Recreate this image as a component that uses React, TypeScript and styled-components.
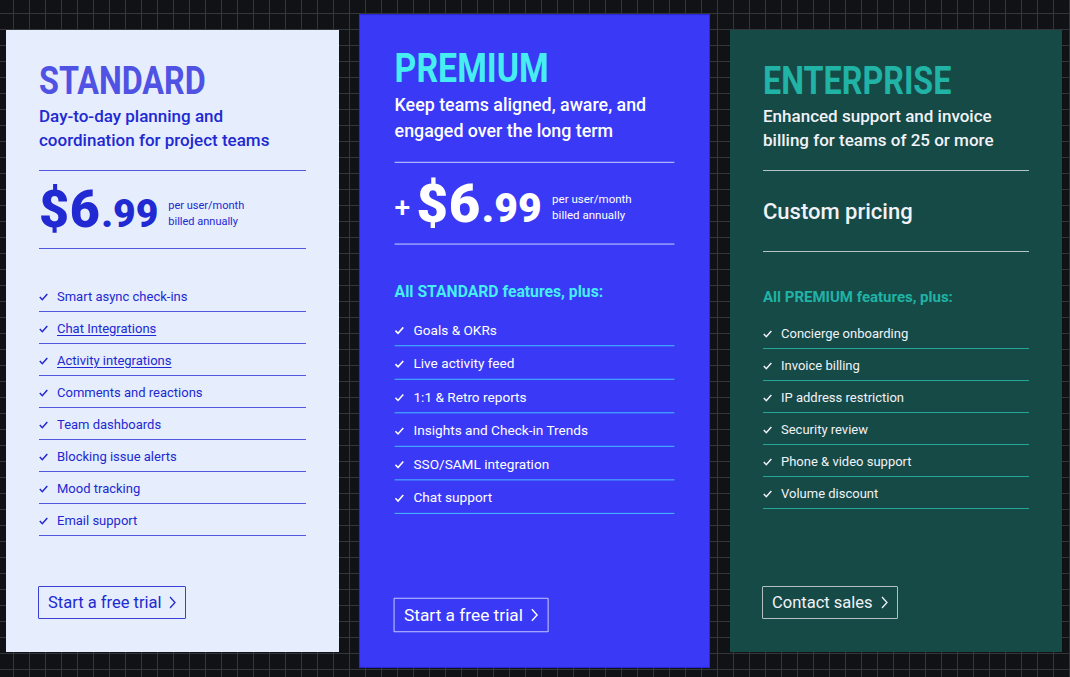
import React from 'react';
import styled, { createGlobalStyle, css } from 'styled-components';

type Tone = 'standard' | 'premium' | 'enterprise';

const palette: Record<
  Tone,
  { bg: string; title: string; text: string; rule: string; itemRule: string; accent: string; button: string }
> = {
  standard: {
    bg: '#e6edfd',
    title: '#4f52e3',
    text: '#2129d2',
    rule: '#5457df',
    itemRule: '#5457df',
    accent: '#2129d2',
    button: '#3a3fd8',
  },
  premium: {
    bg: '#3939f6',
    title: '#46eef2',
    text: '#ffffff',
    rule: '#c6cbff',
    itemRule: '#46b9ff',
    accent: '#46eef2',
    button: '#c4c6ff',
  },
  enterprise: {
    bg: '#164a47',
    title: '#20b3a6',
    text: '#f1f2f8',
    rule: '#b5c4c4',
    itemRule: '#24a597',
    accent: '#20b3a6',
    button: '#b3bfc0',
  },
};

const GlobalStyle = createGlobalStyle`
  html, body {
    margin: 0;
    padding: 0;
    background: #111216;
  }
  body {
    font-family: Roboto, "Noto Sans", "Liberation Sans", sans-serif;
    -webkit-font-smoothing: antialiased;
  }
`;

const Page = styled.main`
  box-sizing: border-box;
  width: 1070px;
  height: 677px;
  overflow: hidden;
  display: flex;
  align-items: flex-start;
  gap: 29px;
  padding: 30px 0 0 6px;
  background-color: #111216;
  background-image: linear-gradient(to right, #33363b 1px, transparent 1px),
    linear-gradient(to bottom, #33363b 1px, transparent 1px);
  background-size: 16px 16px;
  background-position: 13px 13px;
`;

const Card = styled.section<{ $tone: Tone }>`
  box-sizing: border-box;
  flex: 0 0 auto;
  width: ${({ $tone }) => ($tone === 'enterprise' ? 332 : 333)}px;
  height: 622px;
  padding: 31px 33px 33px;
  display: flex;
  flex-direction: column;
  background: ${({ $tone }) => palette[$tone].bg};
  color: ${({ $tone }) => palette[$tone].text};
  ${({ $tone }) =>
    $tone === 'premium' &&
    css`
      transform: scale(1.048);
      box-shadow: 0 0 0 1px #2a2ad8;
    `}
`;

/* the brand face is a condensed grotesque; squeeze Roboto to match */
const Title = styled.h2<{ $tone: Tone }>`
  align-self: flex-start;
  margin: 0;
  font-weight: 700;
  font-size: 38px;
  line-height: 40px;
  transform: scaleX(0.85);
  transform-origin: left center;
  color: ${({ $tone }) => palette[$tone].title};
`;

const Subtitle = styled.p`
  margin: 3px 0 0;
  font-size: 17px;
  line-height: 24px;
  font-weight: 500;
`;

const Rule = styled.hr<{ $tone: Tone; $flush?: boolean }>`
  margin: ${({ $flush }) => ($flush ? 0 : 18)}px 0 0;
  border: 0;
  height: 1px;
  background: ${({ $tone }) => palette[$tone].rule};
`;

const PriceRow = styled.div<{ $tall?: boolean }>`
  height: ${({ $tall }) => ($tall ? 80 : 77)}px;
  display: flex;
  align-items: center;
`;

const Amount = styled.div`
  display: flex;
  align-items: baseline;
  font-weight: 900;
  line-height: 1;
`;

const Plus = styled.span`
  font-size: 27px;
  font-weight: 500;
  margin-right: 6px;
  align-self: center;
  margin-top: 8px;
`;

const Dollars = styled.span`
  font-size: 52px;
  letter-spacing: 0.5px;
`;

const Cents = styled.span`
  font-size: 39px;
  margin-left: 1px;
`;

const PriceNote = styled.div`
  margin: 9px 0 0 10px;
  font-size: 11px;
  line-height: 16px;
`;

const CustomPrice = styled.div`
  font-size: 22px;
  font-weight: 500;
`;

const FeatureHeader = styled.h3<{ $tone: Tone }>`
  margin: 35px 0 0;
  font-size: 15px;
  line-height: 20px;
  font-weight: 700;
  color: ${({ $tone }) => palette[$tone].accent};
`;

const FeatureList = styled.ul<{ $afterHeader: boolean }>`
  list-style: none;
  margin: ${({ $afterHeader }) => ($afterHeader ? 10 : 31)}px 0 0;
  padding: 0;
`;

const FeatureItem = styled.li<{ $tone: Tone }>`
  box-sizing: border-box;
  height: 32px;
  display: flex;
  align-items: center;
  gap: 9px;
  border-bottom: 1px solid ${({ $tone }) => palette[$tone].itemRule};
  font-size: 13px;
  padding-top: 1px;
`;

const FeatureLink = styled.span`
  text-decoration: underline;
  text-underline-offset: 2px;
`;

const CheckIcon = styled.svg`
  flex: 0 0 auto;
  width: 9px;
  height: 8px;
  margin-top: 1px;
`;

const CtaButton = styled.button<{ $tone: Tone }>`
  margin-top: auto;
  align-self: flex-start;
  box-sizing: border-box;
  height: 33px;
  margin-left: -1px;
  padding: 0 9px;
  display: inline-flex;
  align-items: center;
  gap: 8px;
  background: transparent;
  border: 1px solid ${({ $tone }) => palette[$tone].button};
  border-radius: 1px;
  color: inherit;
  font-family: inherit;
  font-size: 16.5px;
  cursor: pointer;
`;

const Chevron = styled.svg`
  width: 7px;
  height: 13px;
`;

type Feature = { label: string; link?: boolean };

type Plan = {
  tone: Tone;
  name: string;
  description: string[];
  price?: { plus?: boolean };
  header?: string;
  features: Feature[];
  cta: string;
};

const plans: Plan[] = [
  {
    tone: 'standard',
    name: 'STANDARD',
    description: ['Day-to-day planning and', 'coordination for project teams'],
    price: {},
    features: [
      { label: 'Smart async check-ins' },
      { label: 'Chat Integrations', link: true },
      { label: 'Activity integrations', link: true },
      { label: 'Comments and reactions' },
      { label: 'Team dashboards' },
      { label: 'Blocking issue alerts' },
      { label: 'Mood tracking' },
      { label: 'Email support' },
    ],
    cta: 'Start a free trial',
  },
  {
    tone: 'premium',
    name: 'PREMIUM',
    description: ['Keep teams aligned, aware, and', 'engaged over the long term'],
    price: { plus: true },
    header: 'All STANDARD features, plus:',
    features: [
      { label: 'Goals & OKRs' },
      { label: 'Live activity feed' },
      { label: '1:1 & Retro reports' },
      { label: 'Insights and Check-in Trends' },
      { label: 'SSO/SAML integration' },
      { label: 'Chat support' },
    ],
    cta: 'Start a free trial',
  },
  {
    tone: 'enterprise',
    name: 'ENTERPRISE',
    description: ['Enhanced support and invoice', 'billing for teams of 25 or more'],
    header: 'All PREMIUM features, plus:',
    features: [
      { label: 'Concierge onboarding' },
      { label: 'Invoice billing' },
      { label: 'IP address restriction' },
      { label: 'Security review' },
      { label: 'Phone & video support' },
      { label: 'Volume discount' },
    ],
    cta: 'Contact sales',
  },
];

const Check = () => (
  <CheckIcon viewBox="0 0 9 8" fill="none">
    <path d="M0.8 4.1 L3.3 6.7 L8.3 1" stroke="currentColor" strokeWidth="1.5" />
  </CheckIcon>
);

const PlanCard: React.FC<{ plan: Plan }> = ({ plan }) => (
  <Card $tone={plan.tone}>
    <Title $tone={plan.tone}>{plan.name}</Title>
    <Subtitle>
      {plan.description[0]}
      <br />
      {plan.description[1]}
    </Subtitle>
    <Rule $tone={plan.tone} />
    {plan.price ? (
      <PriceRow>
        {plan.price.plus && <Plus>+</Plus>}
        <Amount>
          <Dollars>$6</Dollars>
          <Cents>.99</Cents>
        </Amount>
        <PriceNote>
          per user/month
          <br />
          billed annually
        </PriceNote>
      </PriceRow>
    ) : (
      <PriceRow $tall>
        <CustomPrice>Custom pricing</CustomPrice>
      </PriceRow>
    )}
    <Rule $tone={plan.tone} $flush />
    {plan.header && <FeatureHeader $tone={plan.tone}>{plan.header}</FeatureHeader>}
    <FeatureList $afterHeader={!!plan.header}>
      {plan.features.map(({ label, link }) => (
        <FeatureItem key={label} $tone={plan.tone}>
          <Check />
          {link ? <FeatureLink>{label}</FeatureLink> : label}
        </FeatureItem>
      ))}
    </FeatureList>
    <CtaButton $tone={plan.tone}>
      {plan.cta}
      <Chevron viewBox="0 0 7 13" fill="none">
        <path d="M1 1 L6 6.5 L1 12" stroke="currentColor" strokeWidth="1.3" />
      </Chevron>
    </CtaButton>
  </Card>
);

export default function App() {
  return (
    <>
      <GlobalStyle />
      <Page>
        {plans.map((plan) => (
          <PlanCard key={plan.tone} plan={plan} />
        ))}
      </Page>
    </>
  );
}
